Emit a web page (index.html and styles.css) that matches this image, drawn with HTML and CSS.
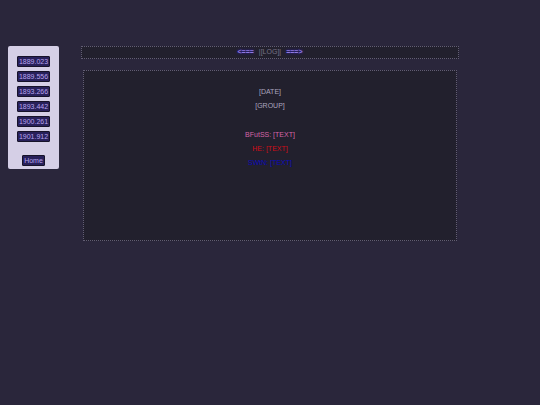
FILE: index.html
```html
<!DOCTYPE html>
<html lang="en">
<head>
<meta charset="utf-8">
<title>Log</title>
<link rel="stylesheet" href="styles.css">
</head>
<body>
<div class="page">
  <nav class="sidebar">
    <a href="#">1889.023</a>
    <a href="#">1889.556</a>
    <a href="#">1893.266</a>
    <a href="#">1893.442</a>
    <a href="#">1900.261</a>
    <a href="#">1901.912</a>
    <a class="home" href="#">Home</a>
  </nav>
  <main class="content">
    <header class="title">
      <a href="#">&lt;===</a>
      <span>|[LOG]|</span>
      <a href="#">===&gt;</a>
    </header>
    <section class="log">
      <p>[DATE]</p>
      <p class="group">[GROUP]</p>
      <p class="pink">BFutSS: [TEXT]</p>
      <p class="red">HE: [TEXT]</p>
      <p class="blue">SWtN: [TEXT]</p>
    </section>
  </main>
</div>
</body>
</html>
```
FILE: styles.css
```css
* {
  box-sizing: border-box;
}

body {
  margin: 0;
  background: #2a263b;
  color: #aaa5bd;
  font: 7px/8px "Liberation Sans", Arial, sans-serif;
}

.page {
  display: grid;
  grid-template-columns: 15% 70% 15%;
  align-items: start;
  padding-top: 46px;
}

.sidebar {
  display: flex;
  flex-direction: column;
  align-items: center;
  gap: 4px;
  width: 51px;
  margin-left: 8px;
  padding: 10px 0 3px;
  border-radius: 2px;
  background: #d5cfe6;
}

.sidebar a {
  padding: 1px;
  border: 1px solid #171329;
  border-radius: 1px;
  background: #28205a;
  color: #b9a5ee;
  line-height: 7px;
  text-decoration: none;
}

.sidebar .home {
  margin-top: 9px;
}

.title {
  display: flex;
  justify-content: center;
  gap: 5px;
  padding: 1px 0 2px;
  border: 1px dotted #625d74;
  background: #22202d;
  color: #777286;
}

.title a {
  color: #8f7ae0;
  font-weight: bold;
  text-decoration: none;
  text-shadow: 0 0 3px #3b20d0;
}

.log {
  min-height: 171px;
  margin: 11px 2px 0;
  padding: 17px 0;
  border: 1px dotted #625d74;
  background: #22202d;
  text-align: center;
}

.log p {
  margin: 0 0 6px;
}

.log .group {
  margin-bottom: 21px;
}

.log .pink {
  color: #d565a8;
}

.log .red {
  color: #d00d18;
}

.log .blue {
  color: #0b08bd;
}
```
